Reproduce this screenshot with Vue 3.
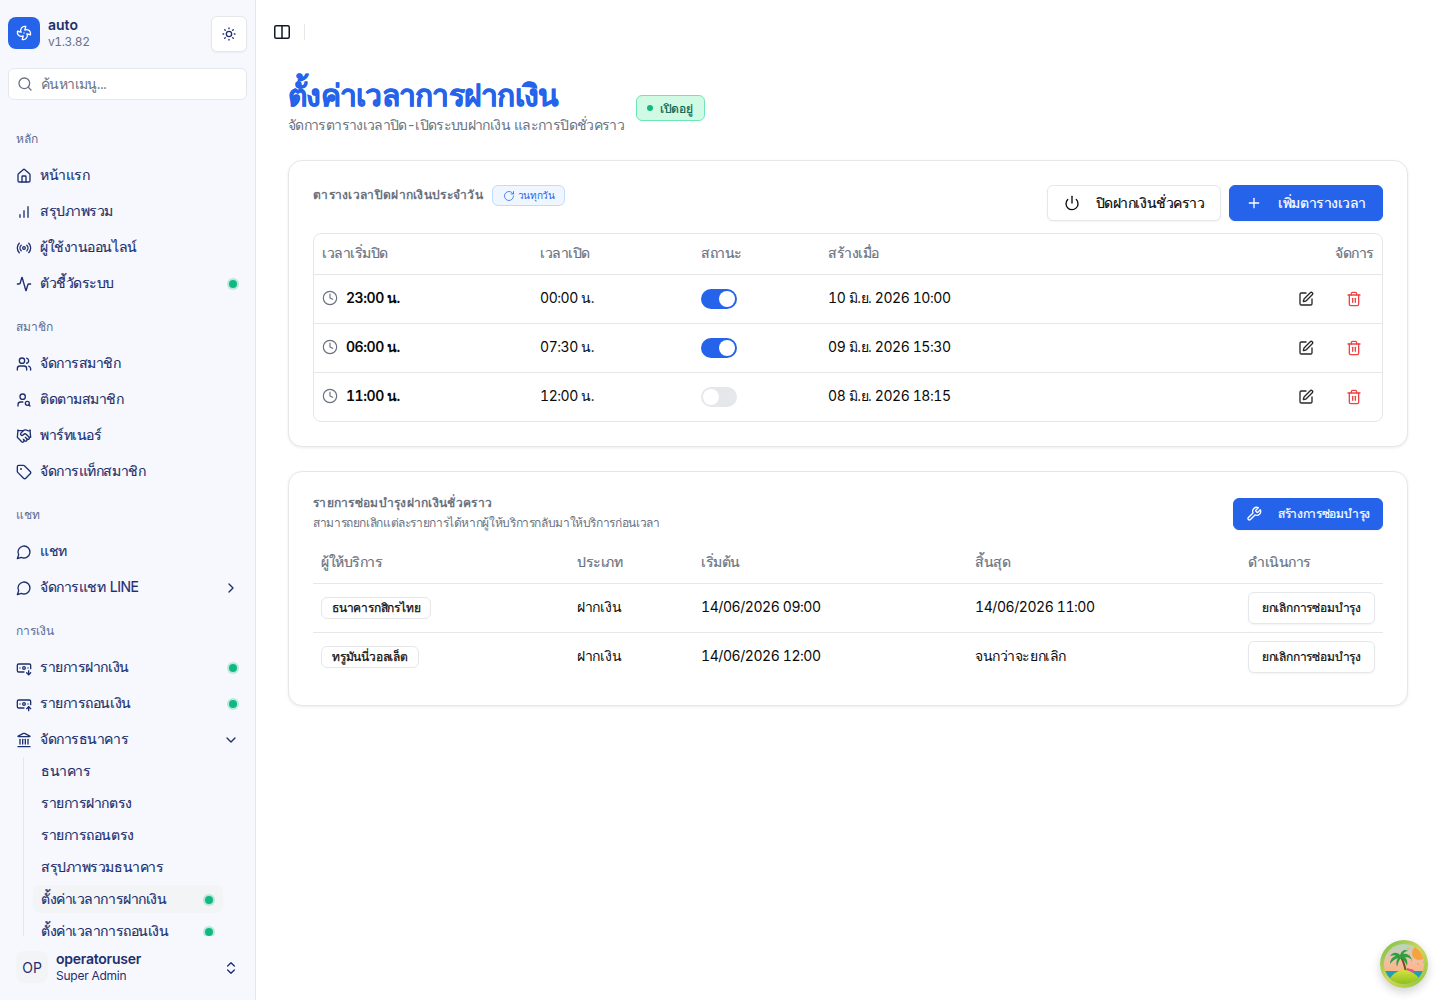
<script setup>
const icons = {
  fan: '<path d="M10.827 16.379a6.082 6.082 0 0 1-8.618-7.002l5.412 1.45a6.082 6.082 0 0 1 7.002-8.618l-1.45 5.412a6.082 6.082 0 0 1 8.618 7.002l-5.412-1.45a6.082 6.082 0 0 1-7.002 8.618l1.45-5.412Z"/><path d="M12 12v.01"/>',
  sun: '<circle cx="12" cy="12" r="4"/><path d="M12 3v1M12 20v1M5.6 5.6l.8.8M17.6 17.6l.8.8M3 12h1M20 12h1M6.4 17.6l-.8.8M18.4 5.6l-.8.8"/>',
  search: '<circle cx="11" cy="11" r="8"/><path d="m21 21-4.3-4.3"/>',
  home: '<path d="M15 21v-8a1 1 0 0 0-1-1h-4a1 1 0 0 0-1 1v8"/><path d="M3 10a2 2 0 0 1 .709-1.528l7-5.999a2 2 0 0 1 2.582 0l7 5.999A2 2 0 0 1 21 10v9a2 2 0 0 1-2 2H5a2 2 0 0 1-2-2z"/>',
  chart: '<path d="M12 20V10M18 20V4M6 20v-4"/>',
  radio: '<path d="M4.9 19.1C1 15.2 1 8.8 4.9 4.9"/><path d="M7.8 16.2c-2.3-2.3-2.3-6.1 0-8.5"/><circle cx="12" cy="12" r="2"/><path d="M16.2 7.8c2.3 2.3 2.3 6.1 0 8.5"/><path d="M19.1 4.9C23 8.8 23 15.1 19.1 19"/>',
  activity: '<path d="M22 12h-2.48a2 2 0 0 0-1.93 1.46l-2.35 8.36a.25.25 0 0 1-.48 0L9.24 2.18a.25.25 0 0 0-.48 0l-2.35 8.36A2 2 0 0 1 4.49 12H2"/>',
  users: '<path d="M16 21v-2a4 4 0 0 0-4-4H6a4 4 0 0 0-4 4v2"/><circle cx="9" cy="7" r="4"/><path d="M22 21v-2a4 4 0 0 0-3-3.87"/><path d="M16 3.13a4 4 0 0 1 0 7.75"/>',
  userSearch: '<circle cx="10" cy="7" r="4"/><path d="M10.3 15H7a4 4 0 0 0-4 4v2"/><circle cx="17" cy="17" r="3"/><path d="m21 21-1.9-1.9"/>',
  handshake: '<path d="m11 17 2 2a1 1 0 1 0 3-3"/><path d="m14 14 2.5 2.5a1 1 0 1 0 3-3l-3.88-3.88a3 3 0 0 0-4.24 0l-.88.88a1 1 0 1 1-3-3l2.81-2.81a5.79 5.79 0 0 1 7.06-.87l.47.28a2 2 0 0 0 1.42.25L21 4"/><path d="m21 3 1 11h-2"/><path d="M3 3 2 14l6.5 6.5a1 1 0 1 0 3-3"/><path d="M3 4h8"/>',
  tag: '<path d="M12.586 2.586A2 2 0 0 0 11.172 2H4a2 2 0 0 0-2 2v7.172a2 2 0 0 0 .586 1.414l8.704 8.704a2.426 2.426 0 0 0 3.42 0l6.58-6.58a2.426 2.426 0 0 0 0-3.42z"/><circle cx="7.5" cy="7.5" r=".5" fill="currentColor"/>',
  chat: '<path d="M7.9 20A9 9 0 1 0 4 16.1L2 22Z"/>',
  noteDown: '<path d="M12 18H4a2 2 0 0 1-2-2V8a2 2 0 0 1 2-2h16a2 2 0 0 1 2 2v5"/><path d="m16 19 3 3 3-3"/><path d="M18 12h.01"/><path d="M19 16v6"/><path d="M6 12h.01"/><circle cx="12" cy="12" r="2"/>',
  noteUp: '<path d="M12 18H4a2 2 0 0 1-2-2V8a2 2 0 0 1 2-2h16a2 2 0 0 1 2 2v5"/><path d="m16 19 3-3 3 3"/><path d="M18 12h.01"/><path d="M19 22v-6"/><path d="M6 12h.01"/><circle cx="12" cy="12" r="2"/>',
  bank: '<path d="M10 18v-7"/><path d="M11.12 2.198a2 2 0 0 1 1.76.006l7.866 3.847c.476.233.31.949-.22.949H3.474c-.53 0-.695-.716-.22-.949z"/><path d="M14 18v-7"/><path d="M18 18v-7"/><path d="M3 22h18"/><path d="M6 18v-7"/>',
  right: '<path d="m9 18 6-6-6-6"/>',
  down: '<path d="m6 9 6 6 6-6"/>',
  upDown: '<path d="m7 15 5 5 5-5"/><path d="m7 9 5-5 5 5"/>',
  clock: '<circle cx="12" cy="12" r="10"/><path d="M12 6v6l4 2"/>',
  power: '<path d="M12 2v10"/><path d="M18.4 6.6a9 9 0 1 1-12.77.04"/>',
  plus: '<path d="M5 12h14"/><path d="M12 5v14"/>',
  edit: '<path d="M12 3H5a2 2 0 0 0-2 2v14a2 2 0 0 0 2 2h14a2 2 0 0 0 2-2v-7"/><path d="M18.375 2.625a1 1 0 0 1 3 3l-9.013 9.014a2 2 0 0 1-.853.505l-2.873.84a.5.5 0 0 1-.62-.62l.84-2.873a2 2 0 0 1 .506-.852z"/>',
  trash: '<path d="M3 6h18"/><path d="M19 6v14c0 1-1 2-2 2H7c-1 0-2-1-2-2V6"/><path d="M8 6V4c0-1 1-2 2-2h4c1 0 2 1 2 2v2"/><path d="M10 11v6"/><path d="M14 11v6"/>',
  wrench: '<path d="M14.7 6.3a1 1 0 0 0 0 1.4l1.6 1.6a1 1 0 0 0 1.4 0l3.77-3.77a6 6 0 0 1-7.94 7.94l-6.91 6.91a2.12 2.12 0 0 1-3-3l6.91-6.91a6 6 0 0 1 7.94-7.94l-3.76 3.76z"/>',
  rotate: '<path d="M21 12a9 9 0 1 1-9-9c2.52 0 4.93 1 6.74 2.74L21 8"/><path d="M21 3v5h-5"/>'
}

const groups = [
  {
    label: 'หลัก',
    items: [
      { icon: 'home', text: 'หน้าแรก' },
      { icon: 'chart', text: 'สรุปภาพรวม' },
      { icon: 'radio', text: 'ผู้ใช้งานออนไลน์' },
      { icon: 'activity', text: 'ตัวชี้วัดระบบ', dot: true }
    ]
  },
  {
    label: 'สมาชิก',
    items: [
      { icon: 'users', text: 'จัดการสมาชิก' },
      { icon: 'userSearch', text: 'ติดตามสมาชิก' },
      { icon: 'handshake', text: 'พาร์ทเนอร์' },
      { icon: 'tag', text: 'จัดการแท็กสมาชิก' }
    ]
  },
  {
    label: 'แชท',
    items: [
      { icon: 'chat', text: 'แชท' },
      { icon: 'chat', text: 'จัดการแชท LINE', chevron: 'right' }
    ]
  },
  {
    label: 'การเงิน',
    items: [
      { icon: 'noteDown', text: 'รายการฝากเงิน', dot: true },
      { icon: 'noteUp', text: 'รายการถอนเงิน', dot: true },
      { icon: 'bank', text: 'จัดการธนาคาร', chevron: 'down' }
    ]
  }
]

const bankItems = [
  { text: 'ธนาคาร' },
  { text: 'รายการฝากตรง' },
  { text: 'รายการถอนตรง' },
  { text: 'สรุปภาพรวมธนาคาร' },
  { text: 'ตั้งค่าเวลาการฝากเงิน', dot: true, active: true },
  { text: 'ตั้งค่าเวลาการถอนเงิน', dot: true }
]

const schedules = [
  { start: '23:00 น.', end: '00:00 น.', on: true, created: '10 มิ.ย. 2026 10:00' },
  { start: '06:00 น.', end: '07:30 น.', on: true, created: '09 มิ.ย. 2026 15:30' },
  { start: '11:00 น.', end: '12:00 น.', on: false, created: '08 มิ.ย. 2026 18:15' }
]

const maintenance = [
  { provider: 'ธนาคารกสิกรไทย', type: 'ฝากเงิน', start: '14/06/2026 09:00', end: '14/06/2026 11:00' },
  { provider: 'ทรูมันนี่วอลเล็ต', type: 'ฝากเงิน', start: '14/06/2026 12:00', end: 'จนกว่าจะยกเลิก' }
]
</script>

<template>
  <div class="layout">
    <aside class="sidebar">
      <div class="brand">
        <div class="logo">
          <svg class="ic" viewBox="0 0 24 24" v-html="icons.fan"></svg>
        </div>
        <div class="brand-text">
          <strong>auto</strong>
          <span>v1.3.82</span>
        </div>
        <button class="theme-btn">
          <svg class="ic" viewBox="0 0 24 24" v-html="icons.sun"></svg>
        </button>
      </div>

      <div class="search">
        <svg class="ic" viewBox="0 0 24 24" v-html="icons.search"></svg>
        <span>ค้นหาเมนู...</span>
      </div>

      <nav class="nav">
        <div v-for="group in groups" :key="group.label" class="group">
          <div class="group-label">{{ group.label }}</div>
          <a v-for="item in group.items" :key="item.text" class="item">
            <svg class="ic" viewBox="0 0 24 24" v-html="icons[item.icon]"></svg>
            <span class="item-text">{{ item.text }}</span>
            <i v-if="item.dot" class="dot"></i>
            <svg v-if="item.chevron" class="ic" viewBox="0 0 24 24" v-html="icons[item.chevron]"></svg>
          </a>
        </div>
        <div class="sub">
          <a v-for="item in bankItems" :key="item.text" class="sub-item" :class="{ active: item.active }">
            <span class="item-text">{{ item.text }}</span>
            <i v-if="item.dot" class="dot"></i>
          </a>
        </div>
      </nav>

      <div class="user">
        <div class="avatar">OP</div>
        <div class="user-text">
          <strong>operatoruser</strong>
          <span>Super Admin</span>
        </div>
        <svg class="ic" viewBox="0 0 24 24" v-html="icons.upDown"></svg>
      </div>
    </aside>

    <main class="main">
      <header class="topbar">
        <svg class="panel-ic" viewBox="0 0 16 14">
          <rect x="0.75" y="0.75" width="14.5" height="12.5" rx="1.5" />
          <path d="M8 1v12" />
        </svg>
        <span class="sep"></span>
      </header>

      <div class="content">
        <div class="page-head">
          <div>
            <h1>ตั้งค่าเวลาการฝากเงิน</h1>
            <p>จัดการตารางเวลาปิด-เปิดระบบฝากเงิน และการปิดชั่วคราว</p>
          </div>
          <span class="status"><i></i>เปิดอยู่</span>
        </div>

        <section class="card">
          <div class="card-head">
            <div class="card-title">
              <h2>ตารางเวลาปิดฝากเงินประจำวัน</h2>
              <span class="repeat">
                <svg class="ic" viewBox="0 0 24 24" v-html="icons.rotate"></svg>
                วนทุกวัน
              </span>
            </div>
            <div class="actions">
              <button class="btn outline">
                <svg class="ic" viewBox="0 0 24 24" v-html="icons.power"></svg>
                ปิดฝากเงินชั่วคราว
              </button>
              <button class="btn primary">
                <svg class="ic" viewBox="0 0 24 24" v-html="icons.plus"></svg>
                เพิ่มตารางเวลา
              </button>
            </div>
          </div>

          <div class="table-box">
            <table class="schedule">
              <colgroup>
                <col style="width: 218px" />
                <col style="width: 161px" />
                <col style="width: 127px" />
                <col />
                <col style="width: 120px" />
              </colgroup>
              <thead>
                <tr>
                  <th>เวลาเริ่มปิด</th>
                  <th>เวลาเปิด</th>
                  <th>สถานะ</th>
                  <th>สร้างเมื่อ</th>
                  <th class="right">จัดการ</th>
                </tr>
              </thead>
              <tbody>
                <tr v-for="row in schedules" :key="row.start">
                  <td class="txt">
                    <span class="start">
                      <svg class="ic" viewBox="0 0 24 24" v-html="icons.clock"></svg>
                      <span class="tight">{{ row.start }}</span>
                    </span>
                  </td>
                  <td class="txt tight">{{ row.end }}</td>
                  <td>
                    <span class="switch" :class="{ on: row.on }"><i></i></span>
                  </td>
                  <td class="txt num">{{ row.created }}</td>
                  <td>
                    <div class="row-actions">
                      <svg class="ic" viewBox="0 0 24 24" v-html="icons.edit"></svg>
                      <svg class="ic red" viewBox="0 0 24 24" v-html="icons.trash"></svg>
                    </div>
                  </td>
                </tr>
              </tbody>
            </table>
          </div>
        </section>

        <section class="card second">
          <div class="card-head">
            <div>
              <h2>รายการซ่อมบำรุงฝากเงินชั่วคราว</h2>
              <p class="hint">สามารถยกเลิกแต่ละรายการได้หากผู้ให้บริการกลับมาให้บริการก่อนเวลา</p>
            </div>
            <button class="btn primary small">
              <svg class="ic" viewBox="0 0 24 24" v-html="icons.wrench"></svg>
              สร้างการซ่อมบำรุง
            </button>
          </div>

          <table class="maint">
            <colgroup>
              <col style="width: 256px" />
              <col style="width: 124px" />
              <col style="width: 274px" />
              <col style="width: 273px" />
              <col />
            </colgroup>
            <thead>
              <tr>
                <th>ผู้ให้บริการ</th>
                <th>ประเภท</th>
                <th>เริ่มต้น</th>
                <th>สิ้นสุด</th>
                <th>ดำเนินการ</th>
              </tr>
            </thead>
            <tbody>
              <tr v-for="row in maintenance" :key="row.provider">
                <td><span class="chip">{{ row.provider }}</span></td>
                <td class="txt type">{{ row.type }}</td>
                <td class="txt num">{{ row.start }}</td>
                <td class="txt num">{{ row.end }}</td>
                <td><button class="cancel">ยกเลิกการซ่อมบำรุง</button></td>
              </tr>
            </tbody>
          </table>
        </section>
      </div>
    </main>

    <!-- floating island button -->
    <div class="island">
      <svg viewBox="0 0 48 48">
        <defs>
          <linearGradient id="ring" x1="0" y1="0" x2="1" y2="1">
            <stop offset="0" stop-color="#6fbf4a" />
            <stop offset="0.5" stop-color="#d3d65c" />
            <stop offset="1" stop-color="#86c440" />
          </linearGradient>
          <linearGradient id="sky" x1="0" y1="0" x2="0" y2="1">
            <stop offset="0" stop-color="#a5dcc8" />
            <stop offset="0.45" stop-color="#f4bda5" />
            <stop offset="0.8" stop-color="#fbb26e" />
          </linearGradient>
          <linearGradient id="hill" x1="0" y1="0" x2="0" y2="1">
            <stop offset="0" stop-color="#d2e33c" />
            <stop offset="1" stop-color="#7cb518" />
          </linearGradient>
          <clipPath id="disc"><circle cx="24" cy="24" r="20" /></clipPath>
        </defs>
        <circle cx="24" cy="24" r="24" fill="url(#ring)" />
        <g clip-path="url(#disc)">
          <rect width="48" height="48" fill="url(#sky)" />
          <circle cx="39" cy="13" r="7" fill="#f7a23b" />
          <path d="M29 9l-2-1M30 15l-2 1M32 20l-1 2M38 23v2M43 21l1 2" stroke="#f7a23b" stroke-width="1" />
          <rect y="31" width="48" height="10" fill="#1f9fb0" />
          <path d="M20 16c3 4 5 10 6 17" stroke="#7a4a20" stroke-width="2" fill="none" />
          <path d="M20 15c-3-3-7-3-10 1 3-1 5-1 6 0-4 1-6 4-6 8 2-3 5-5 8-6-2 3-2 6-1 9 1-4 2-7 4-9 2 2 5 4 6 8 1-4 0-7-2-9 3 0 5 1 7 3-1-4-5-7-9-6 1-2 3-3 5-3-3-2-6-1-8 4Z" fill="#2f9e3f" />
          <path d="M27 28l7 2-1 3-6-1Z" fill="#ec4899" />
          <path d="M6 48c2-11 10-18 18-18s17 7 20 18Z" fill="url(#hill)" />
        </g>
      </svg>
    </div>
  </div>
</template>

<style scoped>
.layout {
  display: flex;
  height: 1000px;
  overflow: hidden;
  color: #0a0a0a;
  font-family: Inter, "Noto Sans", sans-serif;
  font-size: 14px;
  font-variant-numeric: tabular-nums;
}

.ic {
  width: 16px;
  height: 16px;
  flex-shrink: 0;
  fill: none;
  stroke: currentColor;
  stroke-width: 2;
  stroke-linecap: round;
  stroke-linejoin: round;
}

.tight {
  letter-spacing: -0.45px;
}

.num {
  letter-spacing: -0.43px;
}

.sidebar {
  width: 255px;
  flex-shrink: 0;
  display: flex;
  flex-direction: column;
  background: #f7f8fd;
  border-right: 1px solid #e5e7eb;
  color: #1e2f6e;
}

.brand {
  display: flex;
  align-items: center;
  gap: 8px;
  padding: 16px 8px 0;
}

.logo {
  width: 32px;
  height: 32px;
  margin-bottom: 2px;
  border-radius: 8px;
  background: #2563eb;
  color: #fff;
  display: flex;
  align-items: center;
  justify-content: center;
}

.brand-text {
  flex: 1;
  margin-bottom: 2px;
  display: flex;
  flex-direction: column;
  font-size: 12px;
  line-height: 16px;
}

.brand-text strong {
  font-size: 14px;
  font-weight: 600;
  line-height: 18px;
}

.brand-text span {
  color: #64748b;
  letter-spacing: -0.4px;
}

.theme-btn {
  width: 36px;
  height: 36px;
  padding: 0;
  display: flex;
  align-items: center;
  justify-content: center;
  background: #fff;
  border: 1px solid #e5e7eb;
  border-radius: 6px;
  color: #1e2f6e;
  box-shadow: 0 1px 2px rgba(0, 0, 0, 0.05);
}

.search {
  display: flex;
  align-items: center;
  gap: 8px;
  height: 32px;
  box-sizing: border-box;
  margin: 16px 8px 0;
  padding: 0 8px;
  background: #fff;
  border: 1px solid #e5e7eb;
  border-radius: 6px;
  color: #6b7280;
  letter-spacing: -0.6px;
}

.nav {
  flex: 1;
  min-height: 0;
  overflow: hidden;
  padding: 23px 8px 0;
}

.group {
  margin-bottom: 10px;
}

.group:nth-child(4) {
  margin-bottom: 0;
}

.group-label {
  height: 32px;
  box-sizing: border-box;
  margin-bottom: 2px;
  padding: 0 0 2px 8px;
  display: flex;
  align-items: center;
  font-size: 12px;
  color: #5b6b94;
}

.item {
  height: 36px;
  display: flex;
  align-items: center;
  gap: 8px;
  padding: 0 8px;
}

.item .ic {
  margin-top: 2px;
}

.item-text {
  flex: 1;
  white-space: nowrap;
  letter-spacing: -0.45px;
  word-spacing: 1px;
  -webkit-text-stroke: 0.15px currentColor;
}

.dot {
  width: 8px;
  height: 8px;
  margin: 2px 2px 0 0;
  border-radius: 50%;
  background: #10b981;
  box-shadow: 0 0 0 2px rgba(16, 185, 129, 0.25);
}

.sub {
  margin-left: 15px;
  padding: 0 24px 0 9px;
  border-left: 1px solid #e5e7eb;
  display: flex;
  flex-direction: column;
  gap: 4px;
}

.sub-item {
  height: 28px;
  display: flex;
  align-items: center;
  padding: 0 8px;
  border-radius: 8px;
}

.sub-item.active {
  background: #f3f4f6;
}

.user {
  height: 64px;
  box-sizing: border-box;
  padding: 0 16px 2px;
  display: flex;
  align-items: center;
  gap: 8px;
  background: #f7f8fd;
}

.avatar {
  width: 32px;
  height: 32px;
  border-radius: 8px;
  background: #f3f4f6;
  display: flex;
  align-items: center;
  justify-content: center;
}

.user-text {
  flex: 1;
  display: flex;
  flex-direction: column;
  font-size: 12px;
  line-height: 16px;
  letter-spacing: -0.25px;
}

.user-text strong {
  font-size: 14px;
  font-weight: 600;
  line-height: 18px;
}

.user .ic {
  margin-top: 2px;
}

.main {
  flex: 1;
  min-width: 0;
  background: #fff;
}

.topbar {
  height: 64px;
  box-sizing: border-box;
  padding: 0 18px;
  display: flex;
  align-items: center;
  gap: 14px;
}

.panel-ic {
  width: 16px;
  height: 14px;
  fill: none;
  stroke: #111827;
  stroke-width: 1.5;
}

.sep {
  width: 1px;
  height: 16px;
  background: #e5e7eb;
}

.content {
  padding: 16px 32px 0;
}

.page-head {
  display: flex;
  align-items: center;
  gap: 12px;
  margin-bottom: 25px;
}

h1 {
  margin: 0 0 5px;
  font-size: 30px;
  line-height: 30px;
  font-weight: 700;
  letter-spacing: -0.75px;
  color: #2563eb;
  -webkit-text-stroke: 0.4px currentColor;
}

.page-head p {
  margin: 0;
  line-height: 20px;
  letter-spacing: -0.64px;
  word-spacing: 1px;
  color: #6b7280;
}

.status {
  display: inline-flex;
  align-items: center;
  gap: 7px;
  height: 26px;
  box-sizing: border-box;
  margin-top: 1px;
  padding: 0 11px 0 10px;
  border: 1px solid #6ee7b7;
  border-radius: 6px;
  background: #d1fae5;
  color: #065f46;
  font-size: 12px;
  font-weight: 500;
  -webkit-text-stroke: 0.2px currentColor;
  letter-spacing: -0.3px;
}

.status i {
  width: 6px;
  height: 6px;
  border-radius: 50%;
  background: #10b981;
}

.card {
  background: #fff;
  border: 1px solid #e5e7eb;
  border-radius: 14px;
  box-shadow: 0 1px 3px rgba(0, 0, 0, 0.08);
  padding: 24px;
}

.card.second {
  margin-top: 24px;
  padding-top: 21px;
}

.card.second .card-head {
  margin-bottom: 8px;
}

.card.second .btn {
  margin-top: 5px;
}

.card-head {
  display: flex;
  justify-content: space-between;
  align-items: flex-start;
  margin-bottom: 12px;
}

.card-title {
  display: flex;
  align-items: center;
  gap: 9px;
}

h2 {
  margin: 0;
  font-size: 12px;
  line-height: 20px;
  font-weight: 600;
  letter-spacing: 0.3px;
  color: #6b7280;
}

.card-title h2 {
  margin-top: -1px;
}

.hint {
  margin: 0;
  font-size: 12px;
  line-height: 20px;
  letter-spacing: -0.37px;
  color: #6b7280;
}

.repeat {
  display: inline-flex;
  align-items: center;
  gap: 3px;
  height: 21px;
  box-sizing: border-box;
  padding: 0 10px;
  border: 1px solid #bfdbfe;
  border-radius: 6px;
  background: #eff6ff;
  color: #2563eb;
  font-size: 10px;
  letter-spacing: -0.45px;
}

.repeat .ic {
  width: 12px;
  height: 12px;
  stroke-width: 1.5;
}

.actions {
  display: flex;
  gap: 8px;
}

.btn {
  height: 36px;
  padding: 0 16px;
  display: inline-flex;
  align-items: center;
  gap: 16px;
  border-radius: 6px;
  border: 1px solid #e5e7eb;
  font: inherit;
  font-weight: 500;
  -webkit-text-stroke: 0.2px currentColor;
  letter-spacing: -0.45px;
  background: #fff;
  color: #0a0a0a;
  box-shadow: 0 1px 2px rgba(0, 0, 0, 0.05);
}

.btn.primary {
  background: #2563eb;
  border-color: #2563eb;
  color: #fff;
}

.btn.small {
  height: 32px;
  padding: 0 12px;
  font-size: 12px;
  letter-spacing: -0.3px;
}

.table-box {
  border: 1px solid #e5e7eb;
  border-radius: 8px;
  overflow: hidden;
}

table {
  width: 100%;
  border-collapse: collapse;
  table-layout: fixed;
}

th {
  height: 38px;
  padding: 0 8px 2px;
  text-align: left;
  font-weight: 500;
  -webkit-text-stroke: 0.2px currentColor;
  letter-spacing: -0.45px;
  color: #6b7280;
}

th.right {
  text-align: right;
}

td {
  box-sizing: border-box;
  padding: 0 8px;
  height: 49px;
  border-top: 1px solid #e5e7eb;
}

.schedule tbody tr:last-child td {
  height: 48px;
}

td.txt {
  padding-bottom: 2px;
}

td.type {
  letter-spacing: -0.3px;
}

.start {
  display: flex;
  align-items: center;
  gap: 8px;
  font-weight: 600;
}

.start .ic {
  color: #6b7280;
  stroke-width: 1.75;
}

.switch {
  display: flex;
  align-items: center;
  width: 36px;
  height: 20px;
  padding: 2px;
  box-sizing: border-box;
  border-radius: 10px;
  background: #e5e7eb;
}

.switch i {
  width: 16px;
  height: 16px;
  border-radius: 50%;
  background: #fff;
}

.switch.on {
  background: #2563eb;
  justify-content: flex-end;
}

.row-actions {
  display: flex;
  justify-content: flex-end;
  gap: 32px;
  padding-right: 12px;
  color: #27272a;
}

.red {
  color: #ef4444;
}

.maint th {
  height: 42px;
  padding-bottom: 0;
}

.chip {
  display: inline-block;
  padding: 0 10px;
  line-height: 20px;
  border: 1px solid #e5e7eb;
  border-radius: 6px;
  font-size: 12px;
  font-weight: 500;
  -webkit-text-stroke: 0.25px currentColor;
  letter-spacing: -0.2px;
}

.cancel {
  height: 32px;
  width: 127px;
  padding: 0;
  background: #fff;
  border: 1px solid #e5e7eb;
  border-radius: 6px;
  font: inherit;
  font-size: 12px;
  font-weight: 500;
  -webkit-text-stroke: 0.2px currentColor;
  letter-spacing: -0.2px;
  color: #0a0a0a;
  box-shadow: 0 1px 2px rgba(0, 0, 0, 0.05);
}

.island {
  position: fixed;
  right: 12px;
  bottom: 12px;
  width: 48px;
  height: 48px;
  border-radius: 50%;
  box-shadow: 0 4px 10px rgba(0, 0, 0, 0.18);
}

.island svg {
  display: block;
  width: 48px;
  height: 48px;
}
</style>
